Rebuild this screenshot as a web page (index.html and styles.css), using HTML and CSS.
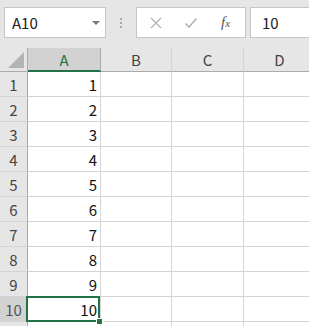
FILE: index.html
```html
<!DOCTYPE html>
<html lang="ja">
<head>
  <meta charset="UTF-8" />
  <title>Sheet1</title>
  <link rel="stylesheet" href="styles.css">
</head>
<body>
  <div class="toolbar">
    <div class="name-box">
      <span>A10</span>
      <span class="arrow"></span>
    </div>
    <div class="dots"><i></i><i></i><i></i></div>
    <div class="fx-box">
      <svg class="ic" width="14" height="14" viewBox="0 0 14 14"><path d="M2 2 L12 12 M12 2 L2 12" stroke="#b4b4b4" stroke-width="1.3" fill="none"/></svg>
      <svg class="ic" width="14" height="14" viewBox="0 0 14 14"><path d="M1.5 7.5 L5 11 L12.5 2.5" stroke="#b4b4b4" stroke-width="1.6" fill="none"/></svg>
      <span class="fx">f<small>x</small></span>
    </div>
    <div class="formula">10</div>
  </div>

  <div class="sheet" id="sheet">
    <div class="corner"></div>
    <div class="col-head active">A</div>
    <div class="col-head">B</div>
    <div class="col-head">C</div>
    <div class="col-head">D</div>
  </div>

  <script>
    const sheet = document.getElementById("sheet");
    for (let i = 1; i <= 11; i++) {
      const sel = i === 10;
      sheet.insertAdjacentHTML("beforeend", `
        <div class="row-head${sel ? ' active' : ''}">${i <= 10 ? i : ''}</div>
        <div class="cell num${sel ? ' selected' : ''}">${i <= 10 ? i : ''}</div>
        <div class="cell"></div>
        <div class="cell"></div>
        <div class="cell"></div>
      `);
    }
  </script>
</body>
</html>
```

FILE: styles.css
```css
body { margin: 0; background: #fff; font-family: "Noto Sans CJK JP", "Noto Sans", sans-serif; overflow: hidden; }

.toolbar { height: 48px; background: #e6e6e6; display: flex; align-items: flex-start; padding-top: 7px; box-sizing: border-box; }
.name-box { margin-left: 4px; width: 102px; height: 31px; box-sizing: border-box; background: #fff; border: 1px solid #c6c6c6;
  display: flex; align-items: center; justify-content: space-between; padding: 0 5px 0 7px; font-size: 15px; color: #222; }
.name-box .arrow { width: 0; height: 0; border-left: 4px solid transparent; border-right: 4px solid transparent; border-top: 4px solid #777; margin-top: 1px; }
.dots { width: 30px; height: 31px; display: flex; flex-direction: column; align-items: center; justify-content: center; gap: 2px; }
.dots i { width: 2px; height: 2px; background: #aaa; display: block; }
.fx-box { width: 110px; height: 31px; box-sizing: border-box; background: #fff; border: 1px solid #c6c6c6;
  display: flex; align-items: center; padding-left: 12px; gap: 21px; }
.fx { font-family: "Liberation Serif", serif; font-style: italic; font-size: 15px; color: #555; margin-left: 2px; }
.fx small { font-size: 11px; }
.formula { margin-left: 4px; flex: 1; height: 31px; box-sizing: border-box; background: #fff; border: 1px solid #c6c6c6; border-right: none;
  display: flex; align-items: center; padding-left: 11px; font-size: 15px; color: #222; }

.sheet { display: grid; grid-template-columns: 28px 73px 71px 72px 72px; grid-auto-rows: 25px; grid-template-rows: 24px;
  height: 278px; overflow: hidden; }
.corner, .col-head, .row-head { background: #e6e6e6; box-sizing: border-box; border-right: 1px solid #ababab; border-bottom: 1px solid #ababab; color: #444; font-size: 15px; }
.corner { position: relative; }
.corner::after { content: ""; position: absolute; right: 3px; bottom: 3px; width: 0; height: 0; border-left: 16px solid transparent; border-bottom: 16px solid #b4b4b4; }
.col-head { display: flex; align-items: center; justify-content: center; border-right-color: #d4d4d4; }
.col-head.active { background: #d2d2d2; color: #217346; border-bottom: 2px solid #217346; border-right-color: #ababab; }
.row-head { display: flex; align-items: center; justify-content: center; border-bottom-color: #d4d4d4; }
.row-head.active { background: #d2d2d2; color: #555; }
.cell { box-sizing: border-box; border-right: 1px solid #d4d4d4; border-bottom: 1px solid #d4d4d4; font-size: 15px; color: #111;
  display: flex; align-items: center; }
.cell.num { justify-content: flex-end; padding-right: 3px; }
.cell.selected { position: relative; }
.cell.selected::after { content: ""; position: absolute; top: -1px; left: -2px; right: 0; bottom: -1px; border: 2px solid #217346; }
.cell.selected::before { content: ""; position: absolute; right: -3px; bottom: -4px; width: 5px; height: 5px; background: #217346; border: 1px solid #fff; z-index: 2; }
```
